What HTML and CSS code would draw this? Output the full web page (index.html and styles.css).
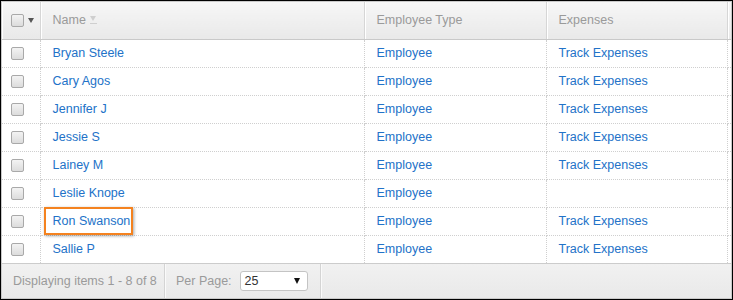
FILE: index.html
```html
<!DOCTYPE html>
<html>
<head>
<meta charset="utf-8">
<link rel="stylesheet" href="styles.css">
</head>
<body>
<div class="frame">
  <div class="grid">
    <table class="tbl">
      <colgroup>
        <col class="c-chk">
        <col class="c-name">
        <col class="c-type">
        <col class="c-exp">
        <col class="c-pad">
      </colgroup>
      <thead>
        <tr>
          <th class="th-chk"><span class="hchk"><span class="cb"></span><span class="caret"></span></span></th>
          <th>Name <span class="sort"></span></th>
          <th>Employee Type</th>
          <th>Expenses</th>
          <th class="th-pad"></th>
        </tr>
      </thead>
      <tbody>
        <tr><td class="td-chk"><span class="cb"></span></td><td><a>Bryan Steele</a></td><td><a>Employee</a></td><td><a>Track Expenses</a></td><td class="td-pad"></td></tr>
        <tr><td class="td-chk"><span class="cb"></span></td><td><a>Cary Agos</a></td><td><a>Employee</a></td><td><a>Track Expenses</a></td><td class="td-pad"></td></tr>
        <tr><td class="td-chk"><span class="cb"></span></td><td><a>Jennifer J</a></td><td><a>Employee</a></td><td><a>Track Expenses</a></td><td class="td-pad"></td></tr>
        <tr><td class="td-chk"><span class="cb"></span></td><td><a>Jessie S</a></td><td><a>Employee</a></td><td><a>Track Expenses</a></td><td class="td-pad"></td></tr>
        <tr><td class="td-chk"><span class="cb"></span></td><td><a>Lainey M</a></td><td><a>Employee</a></td><td><a>Track Expenses</a></td><td class="td-pad"></td></tr>
        <tr><td class="td-chk"><span class="cb"></span></td><td><a>Leslie Knope</a></td><td><a>Employee</a></td><td></td><td class="td-pad"></td></tr>
        <tr><td class="td-chk"><span class="cb"></span></td><td><a class="hl">Ron Swanson</a></td><td><a>Employee</a></td><td><a>Track Expenses</a></td><td class="td-pad"></td></tr>
        <tr><td class="td-chk"><span class="cb"></span></td><td><a>Sallie P</a></td><td><a>Employee</a></td><td><a>Track Expenses</a></td><td class="td-pad"></td></tr>
      </tbody>
    </table>
    <div class="footer">
      <div class="f-sec f-info">Displaying items 1 - 8 of 8</div>
      <div class="f-sec f-pp">
        <span class="pp-label">Per Page:</span>
        <span class="select"><span>25</span><span class="sel-arrow"></span></span>
      </div>
      <div class="f-rest"></div>
    </div>
  </div>
</div>
</body>
</html>
```

FILE: styles.css
```css
html, body {
  margin: 0;
  padding: 0;
  background: #fff;
}
body {
  font-family: "Liberation Sans", Arial, sans-serif;
  font-size: 12.5px;
}
.frame {
  width: 733px;
  height: 300px;
  box-sizing: border-box;
  border: 1px solid #000;
  background: #fff;
}
.grid {
  height: 298px;
  box-sizing: border-box;
  border: 1px solid #c9c9c9;
  display: flex;
  flex-direction: column;
}
.tbl {
  border-collapse: collapse;
  table-layout: fixed;
  width: 729px;
}
.c-chk { width: 38px; }
.c-name { width: 324px; }
.c-type { width: 182px; }
.c-exp { width: 181px; }
.c-pad { width: 4px; }

thead th {
  height: 37px;
  box-sizing: border-box;
  padding: 0 0 0 12px;
  text-align: left;
  font-weight: normal;
  color: #9a9a9a;
  font-size: 12.5px;
  background: linear-gradient(#f6f6f6, #e9e9e9);
  border-bottom: 1px solid #c9c9c9;
  border-right: 1px solid #d6d6d6;
  box-shadow: inset 1px 0 0 #fff;
  vertical-align: middle;
}
thead th.th-chk { padding: 0 0 0 9px; }
thead th.th-pad { padding: 0; border-right: none; }
.hchk {
  display: flex;
  align-items: center;
  gap: 4px;
}
.caret {
  width: 0;
  height: 0;
  border-left: 3.5px solid transparent;
  border-right: 3.5px solid transparent;
  border-top: 5px solid #555;
}
.sort {
  display: inline-block;
  vertical-align: middle;
  margin-left: 1px;
  width: 7px;
  height: 8px;
  position: relative;
  top: -1px;
}
.sort::before {
  content: "";
  position: absolute;
  left: 0;
  top: 0;
  border-left: 3.5px solid transparent;
  border-right: 3.5px solid transparent;
  border-top: 5px solid #cfcfcf;
}
.sort::after {
  content: "";
  position: absolute;
  left: 0;
  bottom: 0;
  width: 7px;
  height: 1px;
  background: #cfcfcf;
}
.cb {
  display: inline-block;
  width: 11px;
  height: 11px;
  border: 1px solid #a9a9a9;
  border-radius: 2px;
  background: linear-gradient(#f3f3f3, #dcdcdc);
  vertical-align: middle;
}
tbody td {
  height: 28px;
  box-sizing: border-box;
  padding: 0 0 0 12px;
  border-bottom: 1px dotted #cfcfcf;
  border-right: 1px dotted #cfcfcf;
  vertical-align: middle;
  white-space: nowrap;
}
tbody td.td-chk { padding-left: 9px; }
tbody td.td-pad { padding: 0; border-right: none; }
tbody tr:last-child td { border-bottom: none; }
a {
  color: #2272c8;
  text-decoration: none;
}
.hl {
  position: relative;
}
.hl::after {
  content: "";
  position: absolute;
  left: -9px;
  right: -3px;
  top: -7px;
  bottom: -7px;
  border: 2px solid #f4821f;
  box-shadow: 1px 1px 3px rgba(0, 0, 0, 0.35);
}
.footer {
  flex: 1;
  display: flex;
  border-top: 1px solid #cccccc;
  background: linear-gradient(#f1f1f1, #e9e9e9);
  color: #9a9a9a;
  font-size: 12.5px;
}
.f-sec {
  display: flex;
  align-items: center;
  border-right: 1px solid #d4d4d4;
  box-shadow: 1px 0 0 #fafafa;
}
.f-info {
  width: 163px;
  padding-left: 11px;
  box-sizing: border-box;
}
.f-pp {
  width: 156px;
  padding-left: 11px;
  box-sizing: border-box;
  gap: 8px;
}
.select {
  width: 68px;
  height: 20px;
  box-sizing: border-box;
  border: 1px solid #c4c4c4;
  border-radius: 3px;
  background: #fff;
  color: #333;
  display: flex;
  align-items: center;
  justify-content: space-between;
  padding: 0 7px 0 4px;
}
.sel-arrow {
  width: 0;
  height: 0;
  border-left: 3.5px solid transparent;
  border-right: 3.5px solid transparent;
  border-top: 6px solid #111;
}
.f-rest { flex: 1; }
```
